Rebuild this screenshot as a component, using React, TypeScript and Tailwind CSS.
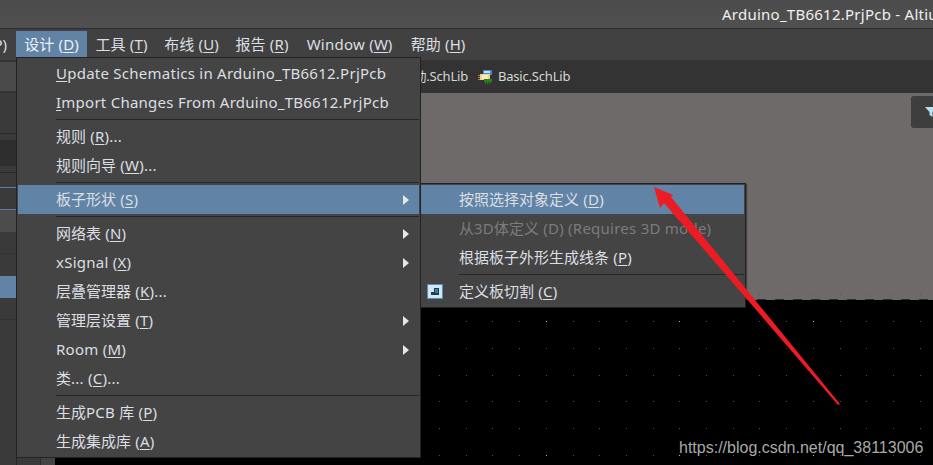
const font = "font-['Noto_Sans','Noto_Sans_CJK_SC',sans-serif]";

type Row =
  | { sep: true }
  | { before: string; key: string; after: string; arrow?: boolean; active?: boolean; disabled?: boolean; icon?: boolean };

const designMenu: Row[] = [
  { before: "", key: "U", after: "pdate Schematics in Arduino_TB6612.PrjPcb" },
  { before: "", key: "I", after: "mport Changes From Arduino_TB6612.PrjPcb" },
  { sep: true },
  { before: "规则 (", key: "R", after: ")..." },
  { before: "规则向导 (", key: "W", after: ")..." },
  { sep: true },
  { before: "板子形状 (", key: "S", after: ")", arrow: true, active: true },
  { sep: true },
  { before: "网络表 (", key: "N", after: ")", arrow: true },
  { before: "xSignal (", key: "X", after: ")", arrow: true },
  { before: "层叠管理器 (", key: "K", after: ")..." },
  { before: "管理层设置 (", key: "T", after: ")", arrow: true },
  { before: "Room (", key: "M", after: ")", arrow: true },
  { before: "类... (", key: "C", after: ")..." },
  { sep: true },
  { before: "生成PCB 库 (", key: "P", after: ")" },
  { before: "生成集成库 (", key: "A", after: ")" },
];

const shapeMenu: Row[] = [
  { before: "按照选择对象定义 (", key: "D", after: ")", active: true },
  { before: "从3D体定义 (D) (Requires 3D mode)", key: "", after: "", disabled: true },
  { before: "根据板子外形生成线条 (", key: "P", after: ")" },
  { sep: true },
  { before: "定义板切割 (", key: "C", after: ")", icon: true },
];

const topMenu = [
  { before: "工具 (", key: "T", w: "w-[69px]" },
  { before: "布线 (", key: "U", w: "w-[71px]" },
  { before: "报告 (", key: "R", w: "w-[70px]" },
  { before: "Window (", key: "W", w: "w-[105px]" },
  { before: "帮助 (", key: "H", w: "w-[72px]" },
];

// the CJK glyphs keep their natural width, only latin runs get spaced out
function Mixed({ text }: { text: string }) {
  return (
    <>
      {text.split(/([\u4e00-\u9fff]+)/).map((part, i) =>
        /[\u4e00-\u9fff]/.test(part) ? (
          <span key={i}>{part}</span>
        ) : (
          <span key={i} className="tracking-[0.25px]">
            {part}
          </span>
        ),
      )}
    </>
  );
}

function CutIcon() {
  return (
    <svg width="16" height="15" viewBox="0 0 16 15" className="block">
      <rect width="16" height="15" fill="#5b8db8" />
      <rect x="1" y="1" width="14" height="13" fill="#cfe8f8" />
      <path d="M4 8h3V4h5v7H4z" fill="#1f3f57" />
      <rect x="8" y="5" width="3" height="4" fill="#4d7896" />
    </svg>
  );
}

function Arrow() {
  return (
    <svg width="6" height="10" viewBox="0 0 6 10" className="block">
      <path d="M0 0l6 5-6 5z" fill="#e6e6e6" />
    </svg>
  );
}

function MenuRows({ rows, indent }: { rows: Row[]; indent: string }) {
  return (
    <>
      {rows.map((r, i) => {
        if ("sep" in r) {
          return (
            <div key={i} className={`h-[5px] flex items-center ${indent}`}>
              <div className="h-px w-full bg-[#272727]" />
            </div>
          );
        }
        return (
          <div
            key={i}
            className={`relative h-[29px] flex items-center ${indent} ${r.active ? "bg-[#6083a6]" : ""} ${r.disabled ? "text-[#7c7c7c]" : "text-[#dcdfe2]"}`}
          >
            {r.icon && (
              <div className="absolute left-[6px] top-[7px]">
                <CutIcon />
              </div>
            )}
            <span className="whitespace-pre">
              <Mixed text={r.before} />
              {r.key && <span className="underline underline-offset-2 tracking-[0.25px]">{r.key}</span>}
              <Mixed text={r.after} />
            </span>
            {r.arrow && (
              <div className="absolute right-[10px] top-[10px]">
                <Arrow />
              </div>
            )}
          </div>
        );
      })}
    </>
  );
}

// lattice of the PCB grid, every fifth dot is brighter
function GridDots() {
  const dots = [];
  for (let r = -1; r < 6; r++) {
    for (let n = 0; n < 33; n++) {
      const x = Math.round(65.2 + 26.7 * n);
      const y = Math.round(321 + 26.8 * r);
      const bright = (n - 14 + 50) % 5 === 4 && r >= 0 && r % 5 === 0;
      const fill = r < 0 ? "#565656" : bright ? "#b8b8b8" : "#505050";
      dots.push(<rect key={`${r}-${n}`} x={x} y={y} width="1" height="1" fill={fill} />);
    }
  }
  return (
    <svg className="absolute left-0 top-0 pointer-events-none" width="933" height="465">
      {dots}
      <line x1="55" y1="299.500" x2="933" y2="299.500" stroke="#2c2c2c" strokeDasharray="9 9" />
    </svg>
  );
}

export default function App() {
  return (
    <div className={`relative w-[933px] h-[465px] overflow-hidden flex flex-col bg-black text-[15px] ${font}`}>
      {/* title bar */}
      <div className="h-[29px] shrink-0 flex items-center overflow-hidden border-b border-[#2e2e2e] bg-gradient-to-b from-[#4c4c4c] to-[#505050]">
        <span className="ml-[722px] whitespace-pre tracking-[0.25px] text-[#f0f0f0]">Arduino_TB6612.PrjPcb - Altium</span>
      </div>

      {/* menu bar */}
      <div className="h-[31px] shrink-0 flex items-center bg-[#414141] text-[#dcdfe2]">
        <div className="w-[7px] mr-[9px] flex justify-end overflow-hidden">
          <span className="whitespace-pre">P)</span>
        </div>
        <div className="w-[71px] h-[27px] flex items-center justify-center bg-[#6083a6] text-[#eef1f4] mt-[2px] self-start">
          <span>
            <Mixed text="设计 (" />
            <span className="underline underline-offset-2">D</span>)
          </span>
        </div>
        {topMenu.map((m) => (
          <div key={m.key} className={`${m.w} flex items-center justify-center whitespace-pre`}>
            <span>
              <Mixed text={m.before} />
              <span className="underline underline-offset-2">{m.key}</span>)
            </span>
          </div>
        ))}
      </div>

      {/* document tabs */}
      <div className="relative h-[33px] shrink-0 flex items-center bg-[#333333] text-[13px] tracking-[-0.2px] text-[#d6d6d6]">
        <div className="absolute left-0 top-[2px] w-[16px] h-[29px] bg-[#4a4a4a]" />
        <div className="ml-[421px] w-[47px] flex justify-end overflow-hidden whitespace-pre">
          <span>驱动.SchLib</span>
        </div>
        <svg width="15" height="14" viewBox="0 0 15 14" className="ml-[10px] mr-[5px]">
          <rect x="5" y="0" width="9" height="5" fill="#4a84d8" />
          <rect x="6" y="1" width="6" height="2" fill="#cfe2fa" />
          <path d="M0 5h3v1H0zM0 7h3v1H0zM0 9h3v1H0z" fill="#a8843a" />
          <rect x="2" y="4" width="10" height="6" fill="#e8d68c" />
          <rect x="4" y="5" width="6" height="4" fill="#f6ecc0" />
          <path d="M6 9h8v3H6zM7 12h1v2H7zM9 12h1v2H9zM11 12h1v2h-1z" fill="#2f7a25" />
        </svg>
        <div className="whitespace-pre">Basic.SchLib</div>
      </div>

      {/* workspace */}
      <div className="flex-1 flex min-h-0">
        <div className="w-[17px] shrink-0 flex flex-col bg-[#3a3a3a] border-r border-[#262626]">
          <div className="h-[41px] border-b border-[#2a2a2a] shrink-0" />
          <div className="h-[6px] shrink-0" />
          <div className="h-[26px] bg-[#2e2e2e] shrink-0" />
          <div className="h-[7px] border-b border-[#2a2a2a] shrink-0" />
          <div className="h-[15px] border-b border-[#5d7f9f] shrink-0" />
          <div className="h-[21px] shrink-0" />
          <div className="h-[23px] bg-[#4c4c4c] border-t border-[#5d7f9f] shrink-0" />
          <div className="h-[22px] border-b border-[#333] shrink-0" />
          <div className="h-[22px] shrink-0" />
          <div className="h-[22px] bg-[#6083a6] shrink-0" />
          <div className="h-[22px] border-b border-[#333] shrink-0" />
        </div>
        <div className="w-[38px] shrink-0 bg-[#3a3a3a] flex">
          <div className="w-[24px] border-r border-[#2c2c2c]" />
          <div className="flex-1 bg-[#444444]" />
        </div>
        <div className="flex-1 flex flex-col">
          <div className="h-[207px] bg-[#6e6a69] relative">
            <div className="absolute right-0 top-[3px] w-[22px] h-[32px] rounded-l-[3px] bg-[#3e3e3e] overflow-hidden">
              <svg width="12" height="10" viewBox="0 0 12 10" className="mt-[11px] ml-[14px]">
                <path d="M0 0h12L7.500 5v5L4.500 8V5z" fill="#b6e0f0" />
              </svg>
            </div>
          </div>
          <div className="flex-1 bg-black" />
        </div>
      </div>

      <GridDots />

      {/* design menu */}
      <div className="absolute left-[16px] top-[57px] w-[405px] h-[401px] border border-[#222] bg-[#444444] pt-px pl-px pr-px">
        <MenuRows rows={designMenu} indent="pl-[38px]" />
      </div>

      {/* board shape submenu */}
      <div className="absolute left-[420px] top-[183px] w-[326px] h-[125px] border border-[#222] bg-[#444444] pt-px pr-px shadow-[1px_1px_1px_rgba(0,0,0,0.35)]">
        <MenuRows rows={shapeMenu} indent="pl-[38px]" />
      </div>

      {/* annotation */}
      <svg className="absolute left-0 top-0 pointer-events-none" width="933" height="465">
        <path d="M654 187L673 195 671 197 840 404 838 405 664 203 660 208z" fill="#ed1c24" />
      </svg>

      {/* watermark */}
      <div className="absolute left-[679px] top-[436px] text-[16px] text-[#a9a9a9] font-['Liberation_Sans',sans-serif]">
        https://blog.csdn.net/qq_38113006
      </div>
    </div>
  );
}
